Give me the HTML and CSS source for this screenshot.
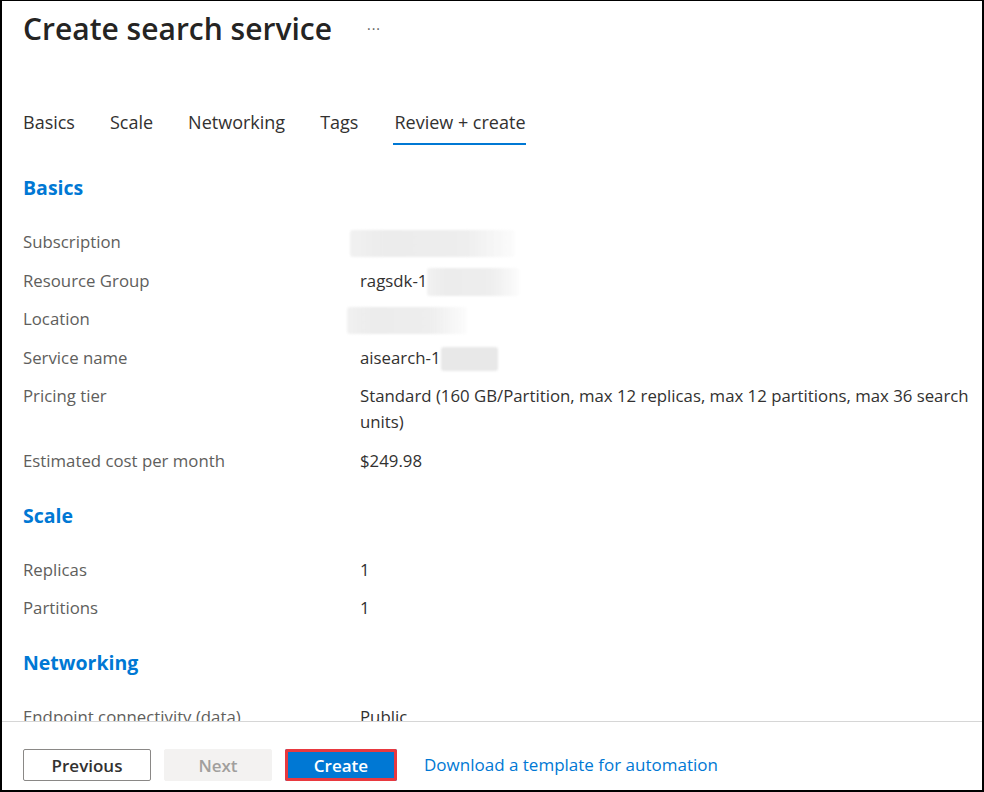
FILE: index.html
```html
<!DOCTYPE html>
<html lang="en">
<head>
<meta charset="utf-8">
<title>Create search service</title>
<link rel="stylesheet" href="styles.css">
</head>
<body>
<div class="frame">
  <header class="page-header">
    <h1 class="title">Create search service</h1>
    <span class="more">···</span>
  </header>
  <nav class="tabs">
    <span class="tab">Basics</span>
    <span class="tab">Scale</span>
    <span class="tab">Networking</span>
    <span class="tab">Tags</span>
    <span class="tab active">Review + create</span>
  </nav>
  <main class="content">
    <section class="section">
      <h2 class="section-title">Basics</h2>
      <div class="rows">
        <div class="label">Subscription</div>
        <div class="value"><span class="redact redact-sub"></span></div>
        <div class="label">Resource Group</div>
        <div class="value">ragsdk-1<span class="redact redact-rg"></span></div>
        <div class="label">Location</div>
        <div class="value"><span class="redact redact-loc"></span></div>
        <div class="label">Service name</div>
        <div class="value">aisearch-1<span class="redact redact-svc"></span></div>
        <div class="label">Pricing tier</div>
        <div class="value">Standard (160 GB/Partition, max 12 replicas, max 12 partitions, max 36 search units)</div>
        <div class="label">Estimated cost per month</div>
        <div class="value">$249.98</div>
      </div>
    </section>
    <section class="section">
      <h2 class="section-title">Scale</h2>
      <div class="rows">
        <div class="label">Replicas</div>
        <div class="value">1</div>
        <div class="label">Partitions</div>
        <div class="value">1</div>
      </div>
    </section>
    <section class="section">
      <h2 class="section-title">Networking</h2>
      <div class="rows">
        <div class="label">Endpoint connectivity (data)</div>
        <div class="value">Public</div>
      </div>
    </section>
  </main>
  <footer class="footer">
    <button class="btn btn-secondary">Previous</button>
    <button class="btn btn-disabled">Next</button>
    <button class="btn btn-primary">Create</button>
    <a class="link" href="#">Download a template for automation</a>
  </footer>
</div>
</body>
</html>
```
FILE: styles.css
```css
* { box-sizing: border-box; }
html, body { margin: 0; padding: 0; background: #fff; }
body {
  font-family: "Open Sans", "Noto Sans", sans-serif;
  color: #323130;
}
.frame {
  width: 984px;
  height: 792px;
  border-style: solid;
  border-color: #000;
  border-width: 1px 2px 2px 2px;
  display: flex;
  flex-direction: column;
  overflow: hidden;
}
.page-header {
  display: flex;
  align-items: center;
  padding: 9px 0 0 21px;
  height: 46px;
}
.title {
  margin: 0;
  font-size: 30px;
  font-weight: 600;
  line-height: 36px;
  color: #252423;
  letter-spacing: 0;
}
.more {
  margin-left: 35px;
  font-size: 14px;
  color: #605e5c;
  letter-spacing: 1px;
}
.tabs {
  display: flex;
  gap: 35px;
  padding: 0 0 0 21px;
  margin-top: 63px;
}
.tab {
  font-size: 18px;
  line-height: 24px;
  padding-bottom: 9px;
  border-bottom: 2px solid transparent;
  color: #323130;
}
.tab.active {
  border-bottom-color: #0078d4;
  padding: 0 1px 9px;
}
.content {
  flex: 1;
  overflow: hidden;
  padding: 30px 4px 0 21px;
}
.section + .section { margin-top: 29px; }
.section-title {
  margin: 0 0 28px;
  font-size: 19.5px;
  font-weight: 700;
  line-height: 26px;
  color: #0078d4;
}
.rows {
  display: grid;
  grid-template-columns: 337px 1fr;
  row-gap: 12.5px;
  font-size: 16.8px;
  line-height: 26px;
}
.label { color: #605e5c; }
.value { color: #323130; }
.redact {
  display: inline-block;
  vertical-align: middle;
  margin-top: -4px;
  margin-bottom: -4px;
  border-radius: 3px;
  background: linear-gradient(90deg, rgba(232,232,232,0.6), #ececec 20%, #eeeeee 70%, rgba(240,240,240,0.2));
  filter: blur(1px);
}
.redact-sub { width: 165px; height: 27px; margin-left: -10px; }
.redact-rg { width: 92px; height: 28px; }
.redact-loc { width: 120px; height: 27px; margin-left: -13px; }
.redact-svc { width: 57px; height: 24px; background: #e8e8e8; }
.footer {
  border-top: 1px solid #d6d6d6;
  display: flex;
  gap: 13px;
  padding: 27px 0 0 21px;
  height: 69px;
  align-items: flex-start;
  background: #fff;
}
.btn {
  height: 32px;
  font-family: inherit;
  font-size: 17px;
  font-weight: 600;
  border-radius: 2px;
  padding: 0;
  cursor: pointer;
}
.btn-secondary {
  width: 128px;
  background: #fff;
  border: 1px solid #8a8886;
  color: #323130;
}
.btn-disabled {
  width: 108px;
  background: #f3f2f1;
  border: 1px solid #f3f2f1;
  color: #a19f9d;
}
.btn-primary {
  width: 112px;
  background: #0078d4;
  border: none;
  box-shadow: inset 0 0 0 3px #e8393f;
  color: #fff;
}
.link {
  margin-left: 14px;
  font-size: 17px;
  line-height: 32px;
  color: #0078d4;
  text-decoration: none;
}
```
